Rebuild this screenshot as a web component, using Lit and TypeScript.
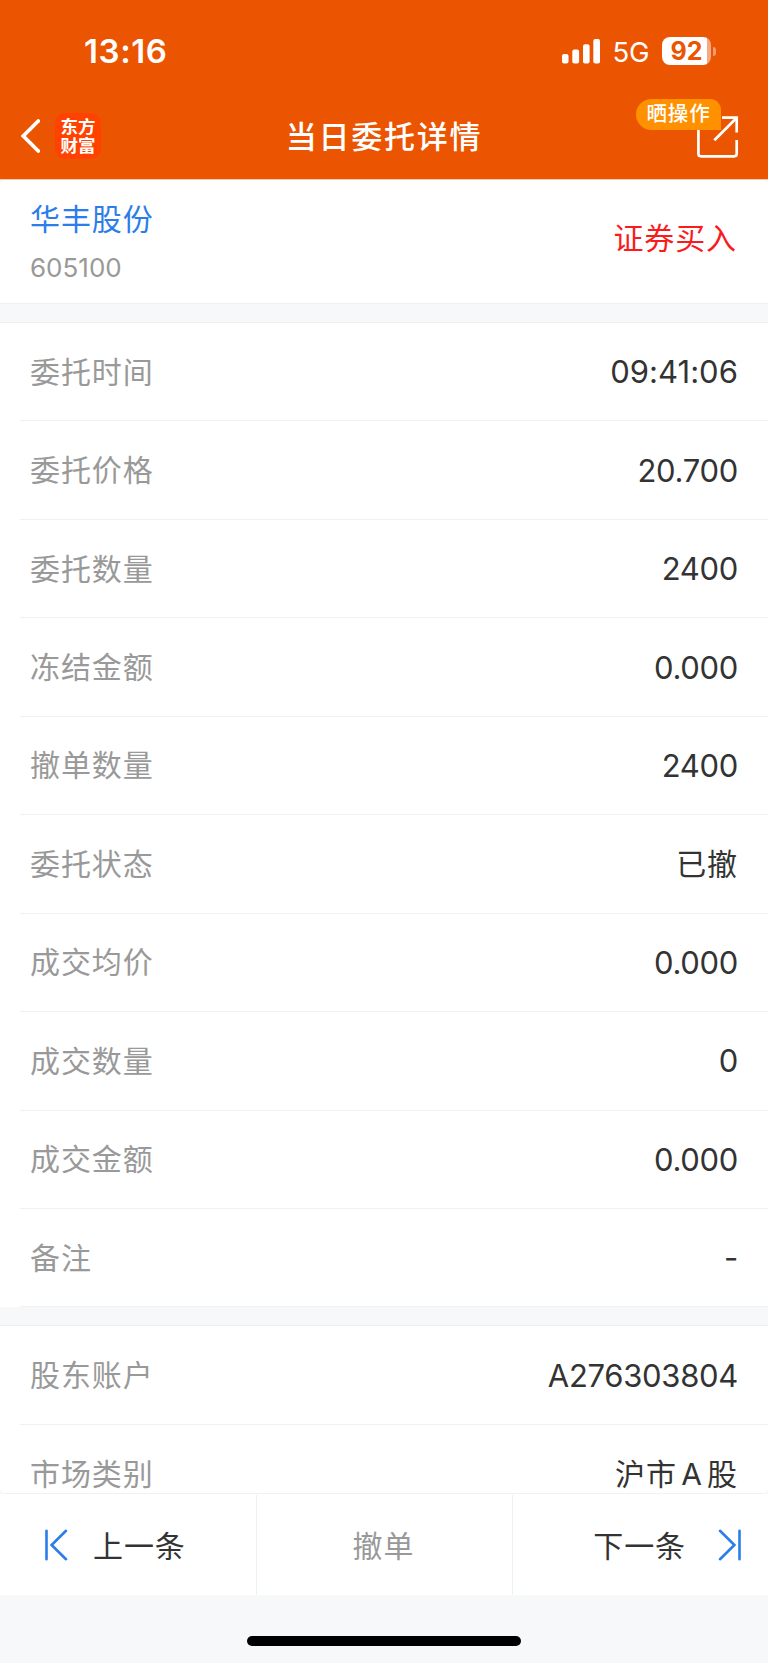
import { LitElement, html, css } from "lit";
import { customElement, property } from "lit/decorators.js";

interface Field {
  label: string;
  value: string;
  kind?: string;
}

const ORDER: Field[] = [
  { label: "委托时间", value: "09:41:06", kind: "clock" },
  { label: "委托价格", value: "20.700" },
  { label: "委托数量", value: "2400" },
  { label: "冻结金额", value: "0.000" },
  { label: "撤单数量", value: "2400" },
  { label: "委托状态", value: "已撤", kind: "cjk" },
  { label: "成交均价", value: "0.000" },
  { label: "成交数量", value: "0" },
  { label: "成交金额", value: "0.000" },
  { label: "备注", value: "-" },
];

const ACCOUNT: Field[] = [
  { label: "股东账户", value: "A276303804" },
  { label: "市场类别", value: "沪市 A 股", kind: "cjk" },
];

@customElement("status-bar")
class StatusBar extends LitElement {
  static styles = css`
    :host { display: flex; justify-content: space-between; align-items: center; height: 102px; padding: 0 52px 0 84px; box-sizing: border-box; color: #fff; }
    .time { font-size: 33px; font-weight: 600; letter-spacing: 0.6px; }
    .right { display: flex; align-items: center; }
    .net { font-size: 27.5px; margin: 2px 13px 0 12px; letter-spacing: -0.4px; }
    .battery { display: flex; align-items: center; gap: 2px; }
    .cell { width: 49px; height: 28px; border-radius: 8px; background: linear-gradient(90deg, #fff 45px, #f6a884 45px); color: #eb5502; font-size: 25px; font-weight: 700; line-height: 28px; text-align: center; }
    .tip { width: 3px; height: 9px; border-radius: 0 4px 4px 0; background: #f29a70; }
  `;
  render() {
    return html`
      <span class="time">13:16</span>
      <div class="right">
        <svg width="39" height="25" viewBox="0 0 39 25" fill="#fff">
          <rect x="0" y="15" width="6.5" height="9.4" rx="2" />
          <rect x="10.3" y="10.5" width="6.8" height="13.9" rx="2" />
          <rect x="21" y="5.3" width="6.6" height="19.1" rx="2" />
          <rect x="31.3" y="0" width="6.7" height="24.4" rx="2" />
        </svg>
        <span class="net">5G</span>
        <div class="battery"><span class="cell">92</span><span class="tip"></span></div>
      </div>
    `;
  }
}

@customElement("nav-bar")
class NavBar extends LitElement {
  static styles = css`
    :host { display: grid; grid-template-columns: 1fr auto 1fr; align-items: center; height: 68px; padding: 0 29px 0 20px; color: #fff; }
    .left { display: flex; align-items: center; gap: 15px; }
    .logo { display: grid; place-content: center; width: 46px; height: 46px; border-radius: 10px; background: #ff4200; font-size: 17.5px; line-height: 19px; font-weight: 700; }
    .title { font-size: 31px; font-weight: 500; letter-spacing: 1.75px; line-height: 46px; padding: 2px 0 0 3px; margin-right: -6px; }
    .share { position: relative; justify-self: end; width: 42px; height: 44px; margin-top: 2px; }
    .icon { display: block; }
    .badge { position: absolute; right: 18px; top: -16px; width: 85px; height: 31px; border-radius: 15.5px 11px 0 15.5px; background: #ff9000; font-size: 20.5px; letter-spacing: 0.9px; line-height: 30px; text-align: center; font-weight: 500; white-space: nowrap; }
  `;
  render() {
    return html`
      <div class="left">
        <svg width="20" height="36" viewBox="0 0 20 36" fill="none" stroke="#fff" stroke-width="3.8" stroke-linecap="round" stroke-linejoin="miter">
          <path d="M18.3 3 L3.3 18 L18.3 33" />
        </svg>
        <div class="logo"><span>东方</span><span>财富</span></div>
      </div>
      <span class="title">当日委托详情</span>
      <div class="share">
        <svg class="icon" width="42" height="44" viewBox="0 0 42 44" fill="none" stroke="#fff" stroke-width="2.7">
          <path d="M25 2.7 H39.7 V17.5" />
          <path d="M39 3.5 L17.3 25.2" />
          <path d="M1.4 14 V38.8 Q1.4 41.3 3.9 41.3 H37.2 Q39.7 41.3 39.7 38.8 V25" />
        </svg>
        <span class="badge">晒操作</span>
      </div>
    `;
  }
}

@customElement("field-list")
class FieldList extends LitElement {
  @property({ attribute: false }) fields: Field[] = [];
  static styles = css`
    :host { display: block; background: #fff; }
    .row { display: flex; align-items: center; justify-content: space-between; height: 98.44px; margin-left: 20px; padding: 0 30px 0 10px; box-sizing: border-box; border-bottom: 1px solid #f0f1f3; }
    .label { font-size: 30px; letter-spacing: 0.9px; color: #999; margin-bottom: 4px; }
    .value { font-size: 31px; letter-spacing: -0.3px; color: #333; }
    .clock { letter-spacing: 0.05px; }
    .cjk { font-size: 30px; letter-spacing: 0.9px; word-spacing: -5px; margin-bottom: 4px; }
  `;
  render() {
    return this.fields.map(
      (f) => html`<div class="row">
        <span class="label">${f.label}</span>
        <span class="value ${f.kind ?? ""}">${f.value}</span>
      </div>`,
    );
  }
}

@customElement("app-root")
class AppRoot extends LitElement {
  static styles = css`
    :host { display: flex; flex-direction: column; height: 1663px; overflow: hidden; background: #f7f8fa; font-family: Inter, "Noto Sans CJK SC", sans-serif; }
    .top { background: #eb5502; height: 179px; border-bottom: 1px solid #fbc8ad; flex: none; }
    .content { height: 1313px; flex: none; overflow: hidden; border-radius: 5px; border-bottom: 1px solid #f0f1f3; }
    .summary { display: flex; justify-content: space-between; align-items: center; box-sizing: border-box; height: 124px; padding: 0 31px 0 30px; background: #fff; border-bottom: 1px solid #eeeff1; }
    .stock { display: flex; flex-direction: column; margin-top: -1px; }
    .name { font-size: 30px; letter-spacing: 0.9px; line-height: 44px; color: #2b7de9; }
    .code { font-size: 26px; letter-spacing: 0; line-height: 36px; margin-top: 9px; color: #999; }
    .side { font-size: 30px; letter-spacing: 0.9px; line-height: 44px; margin-top: -8px; color: #f91c1c; }
    .gap { height: 18px; border-bottom: 1px solid #eeeff1; background: #f7f8fa; }
    .actions { display: grid; grid-template-columns: 256px 256px 256px; height: 101px; flex: none; background: #fff; font-size: 30px; letter-spacing: 0.9px; color: #333; }
    .action { display: flex; align-items: center; justify-content: center; box-sizing: border-box; margin-top: 1px; }
    .text { margin-bottom: 3px; }
    .prev { justify-content: flex-start; padding-left: 44px; gap: 25px; }
    .cancel { color: #999; border-left: 1px solid #f0f1f3; padding-right: 2px; }
    .next { justify-content: flex-end; padding-right: 26px; gap: 32px; border-left: 1px solid #f0f1f3; }
    .home { display: flex; justify-content: center; padding-top: 41px; }
    .indicator { width: 274px; height: 10px; border-radius: 5px; background: #000; }
  `;
  render() {
    return html`
      <div class="top">
        <status-bar></status-bar>
        <nav-bar></nav-bar>
      </div>
      <div class="content">
        <div class="summary">
          <div class="stock"><span class="name">华丰股份</span><span class="code">605100</span></div>
          <span class="side">证券买入</span>
        </div>
        <div class="gap"></div>
        <field-list .fields=${ORDER}></field-list>
        <div class="gap"></div>
        <field-list .fields=${ACCOUNT}></field-list>
      </div>
      <div class="actions">
        <div class="action prev">
          <svg width="24" height="32" viewBox="0 0 24 32" fill="none" stroke="#2b7de9" stroke-width="2.6" stroke-linecap="round">
            <path d="M2.5 1.8 V30.2 M22 1.8 L7.6 16 L22 30.2" />
          </svg>
          <span class="text">上一条</span>
        </div>
        <div class="action cancel"><span class="text">撤单</span></div>
        <div class="action next">
          <span class="text">下一条</span>
          <svg width="24" height="32" viewBox="0 0 24 32" fill="none" stroke="#2b7de9" stroke-width="2.6" stroke-linecap="round">
            <path d="M21.5 1.8 V30.2 M2 1.8 L16.4 16 L2 30.2" />
          </svg>
        </div>
      </div>
      <div class="home"><div class="indicator"></div></div>
    `;
  }
}
